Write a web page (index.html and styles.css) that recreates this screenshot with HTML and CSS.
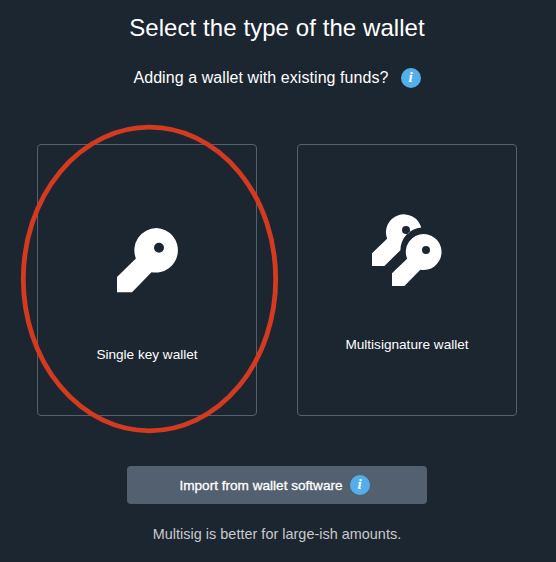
FILE: index.html
```html
<!DOCTYPE html>
<html lang="en">
<head>
<meta charset="utf-8">
<title>Select the type of the wallet</title>
<link rel="stylesheet" href="styles.css">
</head>
<body>
<main class="page">
  <h1 class="title">Select the type of the wallet</h1>
  <p class="subtitle"><span>Adding a wallet with existing funds?</span><span class="info">i</span></p>
  <div class="cards">
    <section class="card card-single">
      <svg class="key" width="64" height="66" viewBox="0 0 64 66" fill="#fff">
        <path fill-rule="evenodd" d="M39.500 0A22.300 22.300 0 1 1 34.500 44.200L15 64.200H0V49L18.900 30.500A22.300 22.300 0 0 1 39.500 0ZM42 14.700a5 5 0 1 0 0 10a5 5 0 1 0 0-10Z"/>
      </svg>
      <span class="label">Single key wallet</span>
      <svg class="ring" width="259" height="310" viewBox="0 0 259 310">
        <ellipse cx="129.500" cy="155" rx="126.200" ry="151.800"/>
      </svg>
    </section>
    <section class="card card-multi">
      <svg class="keys" width="70" height="73" viewBox="0 0 70 73" fill="#fff">
        <path fill-rule="evenodd" d="M49.300 13.600A18 18 0 1 0 15.100 24.700L0 39.300V52H12.400L28.400 36.200A22.500 22.500 0 0 1 49.300 13.600ZM34 12a4 4 0 1 1 0 8a4 4 0 1 1 0-8Z"/>
        <path fill-rule="evenodd" d="M52 20A18 18 0 1 1 48.300 55.700L32.400 72H20V59.300L35.100 44.700A18 18 0 0 1 52 20ZM54 32a4 4 0 1 0 0 8a4 4 0 1 0 0-8Z"/>
      </svg>
      <span class="label">Multisignature wallet</span>
    </section>
  </div>
  <button class="import"><span>Import from wallet software</span><span class="info">i</span></button>
  <p class="hint">Multisig is better for large-ish amounts.</p>
</main>
</body>
</html>
```
FILE: styles.css
```css
* { box-sizing: border-box; }
body {
  margin: 0;
  background: #1c2631;
  color: #fff;
  font-family: "Liberation Sans", Arial, sans-serif;
}
.page {
  width: 554px;
  height: 562px;
  padding-top: 14px;
  display: flex;
  flex-direction: column;
  align-items: center;
}
.title {
  margin: 0;
  font-size: 24px;
  font-weight: 400;
  line-height: 28px;
  letter-spacing: .07px;
}
.subtitle {
  margin: 26px 0 0;
  height: 20px;
  display: flex;
  align-items: center;
  gap: 12px;
  font-size: 16px;
  letter-spacing: .07px;
}
.info {
  width: 20px;
  height: 20px;
  border-radius: 50%;
  background: #55aeec;
  color: #fff;
  font: italic bold 15px/19px "Liberation Serif", serif;
  text-align: center;
}
.cards {
  display: flex;
  gap: 40px;
  margin-top: 56px;
}
.card {
  position: relative;
  width: 220px;
  height: 272px;
  border: 1px solid #56616e;
  border-radius: 4px;
  display: flex;
  flex-direction: column;
  align-items: center;
}
.label {
  font-size: 13.6px;
  line-height: 16px;
}
.card-single { padding-top: 83px; }
.key { margin: 0 0 53px 4px; }
.card-multi { padding-top: 69px; }
.keys { margin-bottom: 50px; overflow: visible; }
.ring {
  position: absolute;
  left: -18px;
  top: -21px;
  z-index: 1;
  fill: none;
  stroke: #d43a20;
  stroke-width: 4.8px;
}
.import {
  width: 300px;
  height: 38px;
  margin-top: 50px;
  padding: 0 5px 0 0;
  border: 0;
  border-radius: 4px;
  background: #53606f;
  color: #fff;
  display: flex;
  align-items: center;
  justify-content: center;
  gap: 7px;
  font-family: inherit;
  font-size: 13.6px;
  -webkit-text-stroke: .3px #fff;
}
.import .info { -webkit-text-stroke: 0; line-height: 18px; }
.hint {
  margin: 21px 0 0;
  color: #c9cacc;
  font-size: 14.4px;
  line-height: 18px;
  letter-spacing: .03px;
}
```
